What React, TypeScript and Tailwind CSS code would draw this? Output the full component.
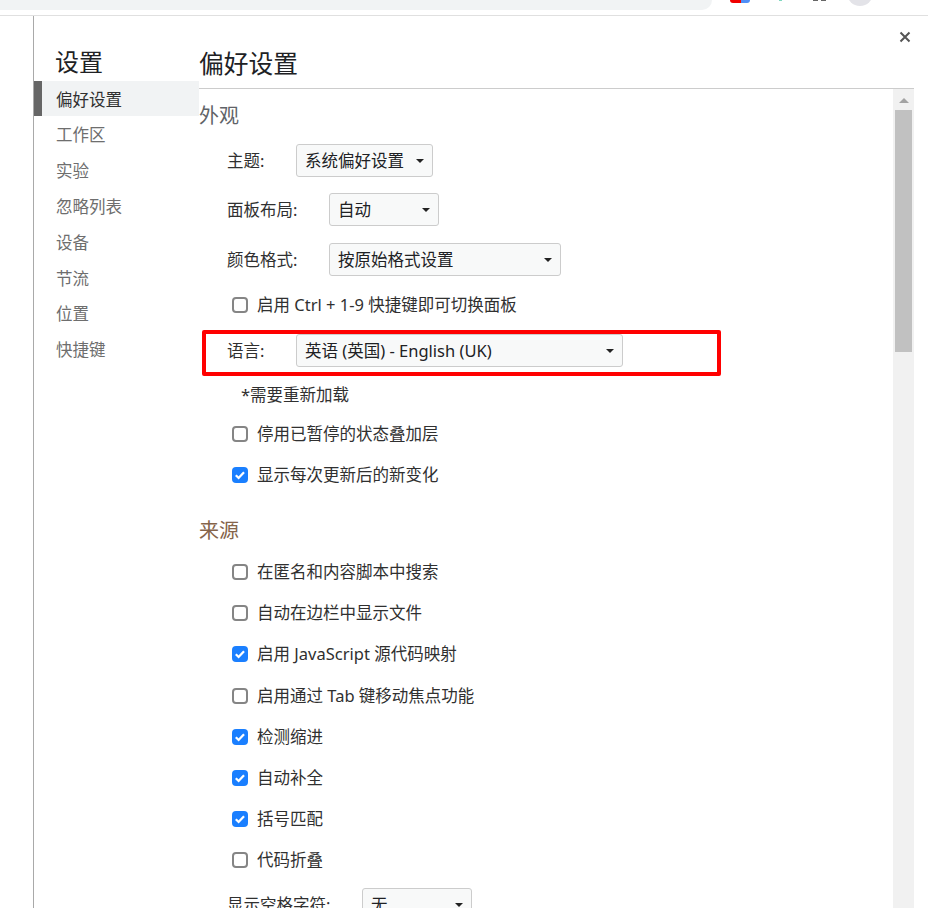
import type { ReactNode } from 'react';

const FONT = "font-['Noto_Sans','Noto_Sans_CJK_SC',sans-serif]";

const NAV = ['偏好设置', '工作区', '实验', '忽略列表', '设备', '节流', '位置', '快捷键'];

const SOURCE_OPTIONS: [string, boolean][] = [
  ['在匿名和内容脚本中搜索', false],
  ['自动在边栏中显示文件', false],
  ['启用 JavaScript 源代码映射', true],
  ['启用通过 Tab 键移动焦点功能', false],
  ['检测缩进', true],
  ['自动补全', true],
  ['括号匹配', true],
  ['代码折叠', false],
];

function Caret() {
  return <span className="h-0 w-0 border-x-[4px] border-t-[4px] border-x-transparent border-t-[#222]" aria-hidden="true" />;
}

function Select({ value, className }: { value: string; className: string }) {
  return (
    <div
      className={`flex h-[33px] shrink-0 items-center justify-between rounded-[3px] border border-[#ccc] bg-[#f8f9f9] pl-[8px] pr-[8px] text-[#202124] ${className}`}
    >
      <span className="whitespace-nowrap">{value}</span>
      <Caret />
    </div>
  );
}

function SelectRow({ label, value, labelWidth, selectWidth, className = '' }: {
  label: string;
  value: string;
  labelWidth: string;
  selectWidth: string;
  className?: string;
}) {
  return (
    <div className={`flex items-center pl-[28px] ${className}`}>
      <span className={`shrink-0 whitespace-nowrap text-[#303030] ${labelWidth}`}>{label}</span>
      <Select value={value} className={selectWidth} />
    </div>
  );
}

function CheckRow({ label, checked = false, className = '' }: { label: ReactNode; checked?: boolean; className?: string }) {
  return (
    <div className={`flex h-[24px] items-center pl-[33px] ${className}`}>
      {checked ? (
        <span className="flex size-[16px] shrink-0 items-center justify-center rounded-[4px] bg-[#1a7fff]">
          <svg viewBox="0 0 16 16" className="size-[14px]" fill="none" stroke="#fff" strokeWidth="2.6">
            <path d="M3.2 8.3 6.4 11.4 12.6 4.8" />
          </svg>
        </span>
      ) : (
        <span className="size-[16px] shrink-0 rounded-[4px] border-2 border-[#858585] bg-white" />
      )}
      <span className="ml-[9px] whitespace-nowrap text-[#303030]">{label}</span>
    </div>
  );
}

function Toolbar() {
  return (
    <div className="flex h-[16px] shrink-0 items-start overflow-hidden border-b border-[#e0e0e0] bg-white">
      <div className="h-[10px] w-[712px] rounded-br-[10px] bg-[#f1f3f4]" />
      <div className="ml-[18px] flex h-[3px] w-[20px] overflow-hidden rounded-b-[3px]">
        <span className="w-[11px] bg-[#f00000]" />
        <span className="flex-1 bg-[#4f8ff7]" />
      </div>
      <span className="ml-[29px] h-[1px] w-[3px] bg-[#7fd8c0]" />
      <span className="ml-[31px] h-[1px] w-[5px] bg-[#666]" />
      <span className="ml-[3px] h-[1px] w-[5px] bg-[#666]" />
      <span className="ml-[21px] -mt-[20px] size-[26px] shrink-0 rounded-full bg-[#e3e3e8]" />
    </div>
  );
}

function Sidebar() {
  return (
    <aside className="w-[166px] shrink-0 self-stretch border-l border-[#a9a9a9] pt-[28px]">
      <h1 className="pb-[1px] pl-[21px] text-[24px] leading-[36px] text-[#202124]">设置</h1>
      <nav className="text-[16.5px]">
        {NAV.map((item, i) => (
          <div
            key={item}
            className={
              i === 0
                ? 'flex h-[35px] items-center border-l-[8px] border-[#666] bg-[#f1f3f4] pl-[14px] pt-[3px] text-[#303030]'
                : 'flex h-[35.8px] items-center pl-[22px] pt-[3px] text-[#6e6e6e]'
            }
          >
            {item}
          </div>
        ))}
      </nav>
    </aside>
  );
}

function Scrollbar() {
  return (
    <div className="absolute bottom-0 right-0 top-0 flex w-[21px] flex-col items-center bg-[#f1f1f1]">
      <span className="mt-[9px] h-0 w-0 border-x-[5px] border-b-[5px] border-x-transparent border-b-[#a3a3a3]" />
      <span className="mt-[7px] h-[242px] w-[17px] bg-[#c1c1c1]" />
    </div>
  );
}

export default function App() {
  return (
    <div className={`flex h-[908px] w-[928px] flex-col overflow-hidden bg-white text-[16.5px] leading-[24px] ${FONT}`}>
      <Toolbar />
      <div className="relative flex min-h-0 flex-1 pl-[33px]">
        <Sidebar />

        <button type="button" className="absolute right-[17px] top-[15px] text-[#555]" aria-label="关闭">
          <svg viewBox="0 0 12 12" className="size-[12px]" fill="none" stroke="currentColor" strokeWidth="2">
            <path d="M1.5 1.5 10.5 10.5M10.5 1.5 1.5 10.5" />
          </svg>
        </button>

        <main className="mr-[14px] flex min-w-0 flex-1 flex-col pt-[30px]">
          <h2 className="h-[42px] shrink-0 text-[24.75px] leading-[35px] text-[#202124]">偏好设置</h2>
          <div className="relative min-h-0 flex-1 border-t border-[#ccc]">
            <Scrollbar />
            <div className="pr-[21px] pt-[13px]">
              <h3 className="text-[20px] leading-[28px] text-[#5f6368]">外观</h3>
              <SelectRow className="mt-[14px]" label="主题:" value="系统偏好设置" labelWidth="w-[69px]" selectWidth="w-[137px]" />
              <SelectRow className="mt-[16px]" label="面板布局:" value="自动" labelWidth="w-[102px]" selectWidth="w-[110px]" />
              <SelectRow className="mt-[17px]" label="颜色格式:" value="按原始格式设置" labelWidth="w-[102px]" selectWidth="w-[232px]" />
              <CheckRow className="mt-[17px]" label="启用 Ctrl + 1-9 快捷键即可切换面板" />
              <div className="relative mt-[17px]">
                <SelectRow label="语言:" value="英语 (英国) - English (UK)" labelWidth="w-[69px]" selectWidth="w-[327px]" />
                <div className="absolute left-[3px] top-[-4px] h-[46px] w-[519px] rounded-[2px] border-4 border-[#ff0000]" />
              </div>
              <p className="mt-[16px] pl-[42px] text-[#303030]">*需要重新加载</p>
              <CheckRow className="mt-[15px]" label="停用已暂停的状态叠加层" />
              <CheckRow className="mt-[17px]" label="显示每次更新后的新变化" checked />

              <h3 className="mt-[30px] text-[20px] leading-[28px] text-[#85644a]">来源</h3>
              <div className="mt-[15px] flex flex-col gap-[17.2px]">
                {SOURCE_OPTIONS.map(([label, checked]) => (
                  <CheckRow key={label} label={label} checked={checked} />
                ))}
              </div>
              <SelectRow className="mt-[16px]" label="显示空格字符:" value="无" labelWidth="w-[135px]" selectWidth="w-[110px]" />
            </div>
          </div>
        </main>
      </div>
    </div>
  );
}
